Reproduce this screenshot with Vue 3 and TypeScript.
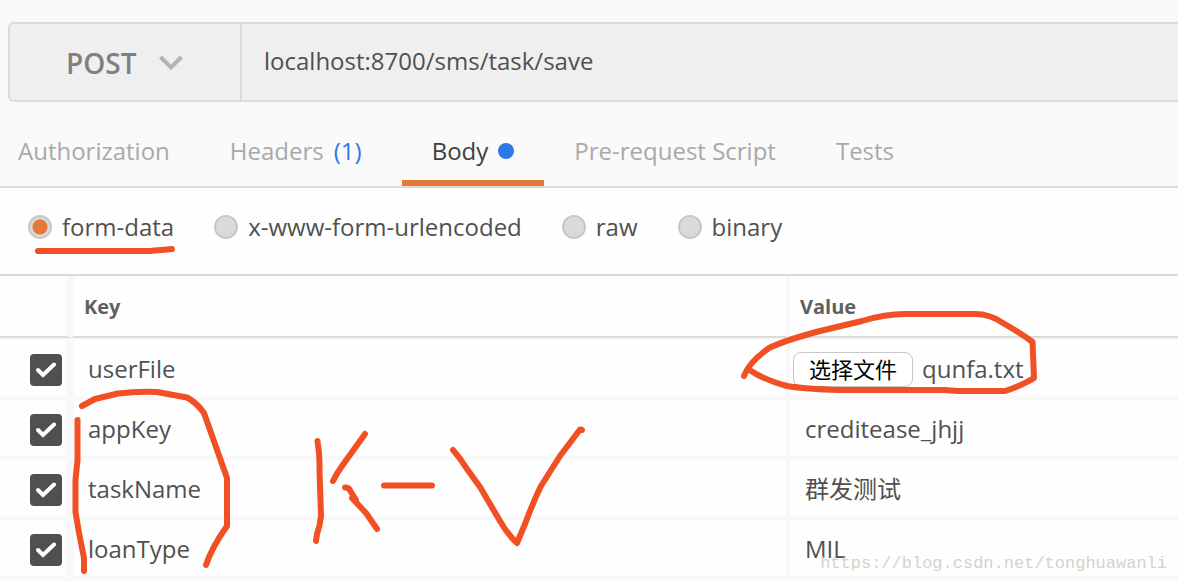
<script setup lang="ts">
import { ref } from 'vue'

interface Param {
  key: string
  value: string
  enabled: boolean
  file?: boolean
}

const method = ref('POST')
const url = ref('localhost:8700/sms/task/save')
const bodyType = ref('form-data')
const bodyTypes = ['form-data', 'x-www-form-urlencoded', 'raw', 'binary']

const params = ref<Param[]>([
  { key: 'userFile', value: 'qunfa.txt', enabled: true, file: true },
  { key: 'appKey', value: 'creditease_jhjj', enabled: true },
  { key: 'taskName', value: '群发测试', enabled: true },
  { key: 'loanType', value: 'MIL', enabled: true },
])
</script>

<template>
  <main class="page">
    <header class="top">
      <div class="request">
        <div class="method">
          <select v-model="method" aria-label="Method">
            <option>POST</option>
          </select>
          <svg class="chevron" width="26" height="18" viewBox="0 0 26 18" aria-hidden="true">
            <path d="M2.5 3 L13 13.5 L23.5 3" />
          </svg>
        </div>
        <input v-model="url" class="url" type="text" aria-label="Request URL" />
      </div>

      <nav class="tabs" role="tablist">
        <button class="tab" type="button" role="tab">Authorization</button>
        <button class="tab counted" type="button" role="tab">
          Headers <span class="count">(1)</span>
        </button>
        <button class="tab active" type="button" role="tab" aria-selected="true">
          Body <span class="dot"></span>
        </button>
        <button class="tab" type="button" role="tab">Pre-request Script</button>
        <button class="tab" type="button" role="tab">Tests</button>
      </nav>
    </header>

    <div class="types" role="radiogroup" aria-label="Body type">
      <label v-for="t in bodyTypes" :key="t" class="type">
        <input v-model="bodyType" type="radio" name="body-type" :value="t" />
        <span>{{ t }}</span>
      </label>
    </div>

    <table class="params">
      <colgroup>
        <col class="col-check" />
        <col class="col-key" />
        <col />
      </colgroup>
      <thead>
        <tr>
          <td class="check"></td>
          <th scope="col">Key</th>
          <th scope="col">Value</th>
        </tr>
      </thead>
      <tbody>
        <tr v-for="p in params" :key="p.key">
          <td class="check">
            <label class="tick">
              <input v-model="p.enabled" type="checkbox" :aria-label="p.key" />
              <svg v-if="p.enabled" width="20" height="16" viewBox="0 0 20 16" aria-hidden="true">
                <path d="M2 8 L7 13 L18 2.5" />
              </svg>
            </label>
          </td>
          <td>{{ p.key }}</td>
          <td v-if="p.file" class="file">
            <div class="picker">
              <button type="button">选择文件</button>
              <span>{{ p.value }}</span>
            </div>
          </td>
          <td v-else>{{ p.value }}</td>
        </tr>
        <tr class="tail">
          <td class="check"></td>
          <td></td>
          <td></td>
        </tr>
      </tbody>
    </table>

    <svg class="marks" width="1178" height="582" viewBox="0 0 1178 582" aria-hidden="true">
      <path d="M38 251 H150 C158 250 164 250 172 249" />
      <path d="M82 406 L95 399 L118 393.500 Q138 391 157 392 L187 397.500 Q197 403 204 413 L227 478 V526 Q212 547 206 565" />
      <path d="M77.500 420 V460 L75.500 480 V512 L79 533 L84 558 V571" />
      <path d="M317.500 441 Q320 456 319.500 470 L321 516 Q320 526 317 534 L316 541" />
      <path d="M365 434 L342 466 Q337 473 333 481" />
      <path d="M345 487.500 Q349 487 351 492 L356 500 L352 498 L366 513 L377 529" />
      <path d="M384 485.500 H432" />
      <path d="M453 450 Q461 459 467 469 L480 487 L500 521 Q508 535 517 543 L525 524 Q534 500 541 486 Q553 467 560 456 L580 429.500 L582 430" />
      <path d="M744 376 Q749 362 769 348 Q786 340 820 331 L862 321 Q885 314 905 314 H975 Q990 314 1003 323 Q1022 334 1032.500 342 L1034 378 Q1023 385 1005 391 H958 L944 390 H840 Q805 389 787 386 Q764 380 748 369" />
    </svg>

    <div class="watermark">https://blog.csdn.net/tonghuawanli</div>
  </main>
</template>

<style>
body {
  margin: 0;
}
</style>

<style scoped>
.page {
  position: relative;
  box-sizing: border-box;
  min-height: 100vh;
  overflow: hidden;
  background: #fefefe;
  color: #505050;
  font-family: 'Open Sans', 'Noto Sans CJK SC', sans-serif;
  font-size: 24px;
  line-height: 32px;
}

button,
input,
select {
  margin: 0;
  font: inherit;
  color: inherit;
}

.top {
  padding-top: 22px;
  background: #fafafa;
  border-bottom: 2px solid #dadada;
}

.request {
  display: flex;
  height: 76px;
  margin-left: 8px;
  border: 2px solid #dadada;
  border-right: 0;
  border-radius: 6px 0 0 6px;
  background: #efefef;
}

.method {
  position: relative;
  flex: none;
  width: 230px;
  border-right: 2px solid #dadada;
}

.method select {
  width: 100%;
  height: 100%;
  padding: 2px 0 0 56px;
  border: 0;
  appearance: none;
  background: transparent;
  color: #808080;
  font-size: 28px;
  font-weight: 600;
}

.chevron {
  position: absolute;
  top: 30px;
  right: 56px;
  pointer-events: none;
}

.chevron path {
  fill: none;
  stroke: #b3b3b3;
  stroke-width: 4;
}

.url {
  flex: 1;
  min-width: 0;
  padding: 0 0 2px 22px;
  border: 0;
  background: transparent;
}

.tabs {
  display: flex;
  height: 84px;
  margin-left: -12px;
}

.tab {
  display: flex;
  align-items: center;
  gap: 10px;
  padding: 20px 30px 0;
  border: 0;
  border-bottom: 6px solid transparent;
  background: transparent;
  color: #a9a9a9;
  white-space: nowrap;
}

.tab.counted {
  padding-right: 40px;
}

.tab.active {
  border-bottom-color: #e47838;
  color: #404040;
}

.count {
  color: #2f78e8;
}

.dot {
  width: 16px;
  height: 16px;
  border-radius: 50%;
  background: #2f78e8;
}

.types {
  display: flex;
  align-items: center;
  gap: 40px;
  height: 78px;
  padding: 0 28px 8px;
}

.type {
  display: flex;
  align-items: center;
  gap: 10px;
  white-space: nowrap;
}

.type input {
  box-sizing: border-box;
  width: 24px;
  height: 24px;
  border: 2px solid #c8c8c8;
  border-radius: 50%;
  appearance: none;
  background: #dadada;
}

.type input:checked {
  background: radial-gradient(circle, #e47838 7px, #dadada 8px);
}

.params {
  width: 100%;
  border-top: 2px solid #dadada;
  border-spacing: 0;
  table-layout: fixed;
}

.col-check {
  width: 72px;
}

.col-key {
  width: 716px;
}

.params td,
.params th {
  box-sizing: border-box;
  height: 60px;
  padding: 2px 14px 0;
  border: 2px solid #f8f8f8;
  text-align: left;
}

.params td:last-child {
  padding-left: 15px;
}

.params thead td,
.params thead th {
  height: 62px;
  padding: 2px 10px 0;
  border-top: 0;
  border-bottom-color: #dadada;
  color: #606060;
  font-size: 20px;
  font-weight: 700;
}

.params .check {
  padding: 4px 0 0 30px;
  border-left: 0;
  border-right-width: 6px;
}

.params td:last-child,
.params th:last-child {
  border-right: 0;
}

.params .tail td {
  height: 4px;
  padding: 0;
  border-bottom: 0;
}

.tick {
  display: flex;
  align-items: center;
  justify-content: center;
  width: 32px;
  height: 32px;
  border-radius: 4px;
  background: #505050;
}

.tick input {
  position: absolute;
  opacity: 0;
}

.tick path {
  fill: none;
  stroke: #fff;
  stroke-width: 4;
  stroke-linecap: round;
}

.params .file:last-child {
  padding-left: 3px;
}

.picker {
  display: flex;
  align-items: center;
  gap: 9px;
}

.picker button {
  height: 35px;
  padding: 0 15px;
  border: 1px solid #c8c8c8;
  border-radius: 8px;
  background: #fff;
  color: #000;
  font-size: 22px;
}

.marks {
  position: absolute;
  top: 0;
  left: 0;
  pointer-events: none;
}

.marks path {
  fill: none;
  stroke: #f05023;
  stroke-width: 6;
  stroke-linecap: round;
  stroke-linejoin: round;
}

.watermark {
  position: absolute;
  right: 11px;
  bottom: 6px;
  color: #d3d3cd;
  font-family: 'Liberation Mono', monospace;
  font-size: 17px;
  line-height: 24px;
}
</style>
